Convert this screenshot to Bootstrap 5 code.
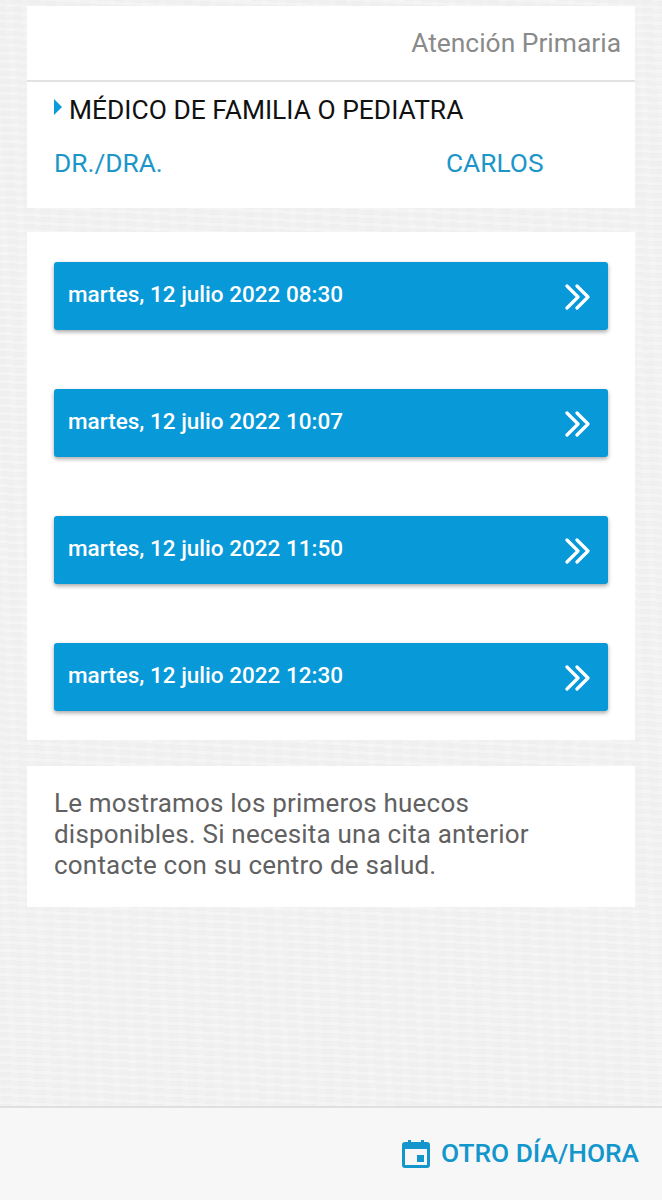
<!DOCTYPE html>
<html lang="es">
<head>
<meta charset="utf-8">
<title>Cita</title>
<link rel="stylesheet" href="https://cdn.jsdelivr.net/npm/bootstrap@5.3.0/dist/css/bootstrap.min.css">
<style>
html,body{height:100%}
body{font-family:Roboto,"Liberation Sans",sans-serif;background-color:#f2f2f2;
background-image:repeating-linear-gradient(3deg,rgba(255,255,255,.16) 0 3px,rgba(0,0,0,.006) 3px 8px),repeating-linear-gradient(87deg,rgba(255,255,255,.1) 0 7px,rgba(0,0,0,.004) 7px 17px)}
.screen{min-height:0;padding:6px 27px 0}
.panel{background:#fff}
.panel-head{height:76px;padding-top:22px;padding-right:14px;font-size:26.4px;line-height:30px;color:#8a8a8a;border-bottom:2px solid #e2e2e2}
.panel-info{height:126px;padding:13px 27px 0}
.spec{font-size:26.4px;line-height:30px;color:#111;gap:7px}
.spec-mark{width:8px;height:16px;flex:none;margin-bottom:6px}
.doc{margin-top:23px;font-size:26.3px;line-height:30px;color:#1c96c8}
.doc-l{width:392px}
.slots{margin-top:24px;height:508px;padding:30px 27px 0;gap:59px}
.slot{height:68px;background:#0899d9;color:#fff;border:0;border-radius:3px;padding:0 18px 2px 14px;font-size:22.5px;font-weight:500;box-shadow:0 2px 4px rgba(0,0,0,.35)}
.slot:hover,.slot:active{background:#0899d9;color:#fff}
.slot svg{margin-top:4px}
.notice{margin-top:26px;height:141px;padding:22px 27px 0;font-size:26px;line-height:31px;color:#616161;letter-spacing:.2px}
.bottom-bar{height:94px;background:#f7f7f7;border-top:2px solid #e0e0e0;padding-right:23px;margin:0}
.other{color:#1296cc;font-size:26.3px;font-weight:500;gap:11px;text-decoration:none;padding-bottom:1px}
</style>
</head>
<body class="d-flex flex-column">
<main class="screen flex-grow-1">
  <section class="panel">
    <div class="panel-head text-end">Atención Primaria</div>
    <div class="panel-info">
      <div class="spec d-flex align-items-center">
        <svg class="spec-mark" viewBox="0 0 8 16"><path d="M0 0l8 8-8 8z" fill="#0a9bdc"/></svg>
        <span>MÉDICO DE FAMILIA O PEDIATRA</span>
      </div>
      <div class="doc d-flex"><span class="doc-l">DR./DRA.</span><span>CARLOS</span></div>
    </div>
  </section>
  <section class="panel slots d-flex flex-column">
    <button class="btn slot d-flex align-items-center justify-content-between w-100"><span>martes, 12 julio 2022 08:30</span><svg width="26" height="26" viewBox="0 0 26 26" fill="none" stroke="#fff" stroke-width="3.2" stroke-linecap="round" stroke-linejoin="round"><path d="M3 2l11 11L3 24M13 2l11 11-11 11"/></svg></button>
    <button class="btn slot d-flex align-items-center justify-content-between w-100"><span>martes, 12 julio 2022 10:07</span><svg width="26" height="26" viewBox="0 0 26 26" fill="none" stroke="#fff" stroke-width="3.2" stroke-linecap="round" stroke-linejoin="round"><path d="M3 2l11 11L3 24M13 2l11 11-11 11"/></svg></button>
    <button class="btn slot d-flex align-items-center justify-content-between w-100"><span>martes, 12 julio 2022 11:50</span><svg width="26" height="26" viewBox="0 0 26 26" fill="none" stroke="#fff" stroke-width="3.2" stroke-linecap="round" stroke-linejoin="round"><path d="M3 2l11 11L3 24M13 2l11 11-11 11"/></svg></button>
    <button class="btn slot d-flex align-items-center justify-content-between w-100"><span>martes, 12 julio 2022 12:30</span><svg width="26" height="26" viewBox="0 0 26 26" fill="none" stroke="#fff" stroke-width="3.2" stroke-linecap="round" stroke-linejoin="round"><path d="M3 2l11 11L3 24M13 2l11 11-11 11"/></svg></button>
  </section>
  <section class="panel notice">Le mostramos los primeros huecos<br>disponibles. Si necesita una cita anterior<br>contacte con su centro de salud.</section>
</main>
<footer class="bottom-bar flex-shrink-0 d-flex align-items-center justify-content-end">
  <a class="other d-flex align-items-center" href="#">
    <svg width="28" height="28" viewBox="0 0 28 28"><path fill="#1296cc" d="M6 0h3v2h10V0h3v2h3a3 3 0 0 1 3 3v20a3 3 0 0 1-3 3H3a3 3 0 0 1-3-3V5a3 3 0 0 1 3-3h3zM3 9v16h22V9z"/><rect x="15" y="15" width="7" height="7" fill="#1296cc"/></svg>
    <span>OTRO DÍA/HORA</span>
  </a>
</footer>
<script src="https://cdn.jsdelivr.net/npm/bootstrap@5.3.0/dist/js/bootstrap.bundle.min.js"></script>
</body>
</html>
